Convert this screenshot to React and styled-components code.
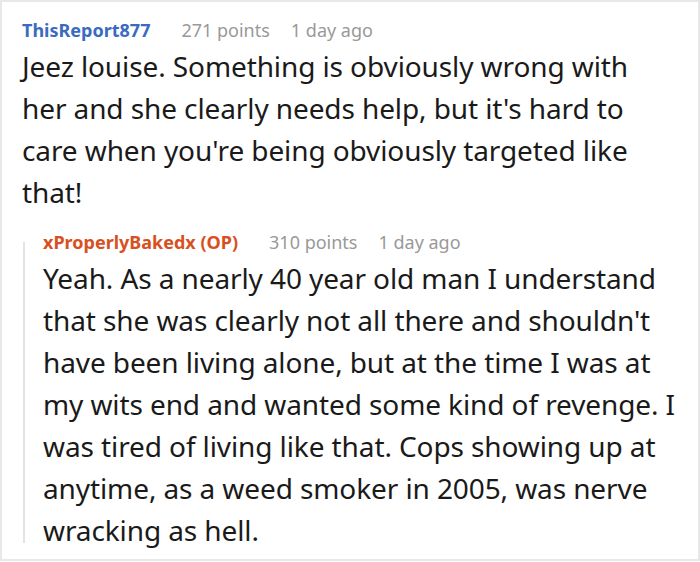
import React from "react";
import styled, { createGlobalStyle } from "styled-components";

const Global = createGlobalStyle`
  html, body { margin: 0; padding: 0; background: #fff; }
  body { font-family: "Noto Sans", "Open Sans", sans-serif; }
`;

const Frame = styled.div`
  box-sizing: border-box;
  width: 700px;
  height: 561px;
  border: 2px solid #e8e8e8;
  padding: 14px 21px 0 20px;
  overflow: hidden;
`;

const Header = styled.div`
  display: flex;
  align-items: baseline;
  font-size: 18px;
  line-height: 28px;
  white-space: nowrap;
`;

const User = styled.span`
  font-weight: 700;
  color: ${(p) => p.$color};
  margin-right: 31px;
`;

const Meta = styled.span`
  color: #999;
  margin-right: 21px;
`;

const Body = styled.div`
  font-size: 28px;
  letter-spacing: -0.1px;
  line-height: 42px;
  color: #1a1a1a;
  margin-top: 1px;
`;

const Reply = styled.div`
  position: relative;
  margin-top: 15px;
  padding-left: 21px;

  &::before {
    content: "";
    position: absolute;
    left: 1px;
    top: 14px;
    bottom: 8px;
    width: 2px;
    background: #e3e3e3;
  }
`;

function Comment({ user, color, points, time, children }) {
  return (
    <>
      <Header>
        <User $color={color}>{user}</User>
        <Meta>{points}</Meta>
        <Meta>{time}</Meta>
      </Header>
      <Body>{children}</Body>
    </>
  );
}

export default function App() {
  return (
    <Frame>
      <Global />
      <Comment user="ThisReport877" color="#3a6bbf" points="271 points" time="1 day ago">
        Jeez louise. Something is obviously wrong with her and she clearly needs help, but it's hard to care when you're being obviously targeted like that!
      </Comment>
      <Reply>
        <Comment user="xProperlyBakedx (OP)" color="#d9501f" points="310 points" time="1 day ago">
          Yeah. As a nearly 40 year old man I understand that she was clearly not all there and shouldn't have been living alone, but at the time I was at my wits end and wanted some kind of revenge. I was tired of living like that. Cops showing up at anytime, as a weed smoker in 2005, was nerve wracking as hell.
        </Comment>
      </Reply>
    </Frame>
  );
}
